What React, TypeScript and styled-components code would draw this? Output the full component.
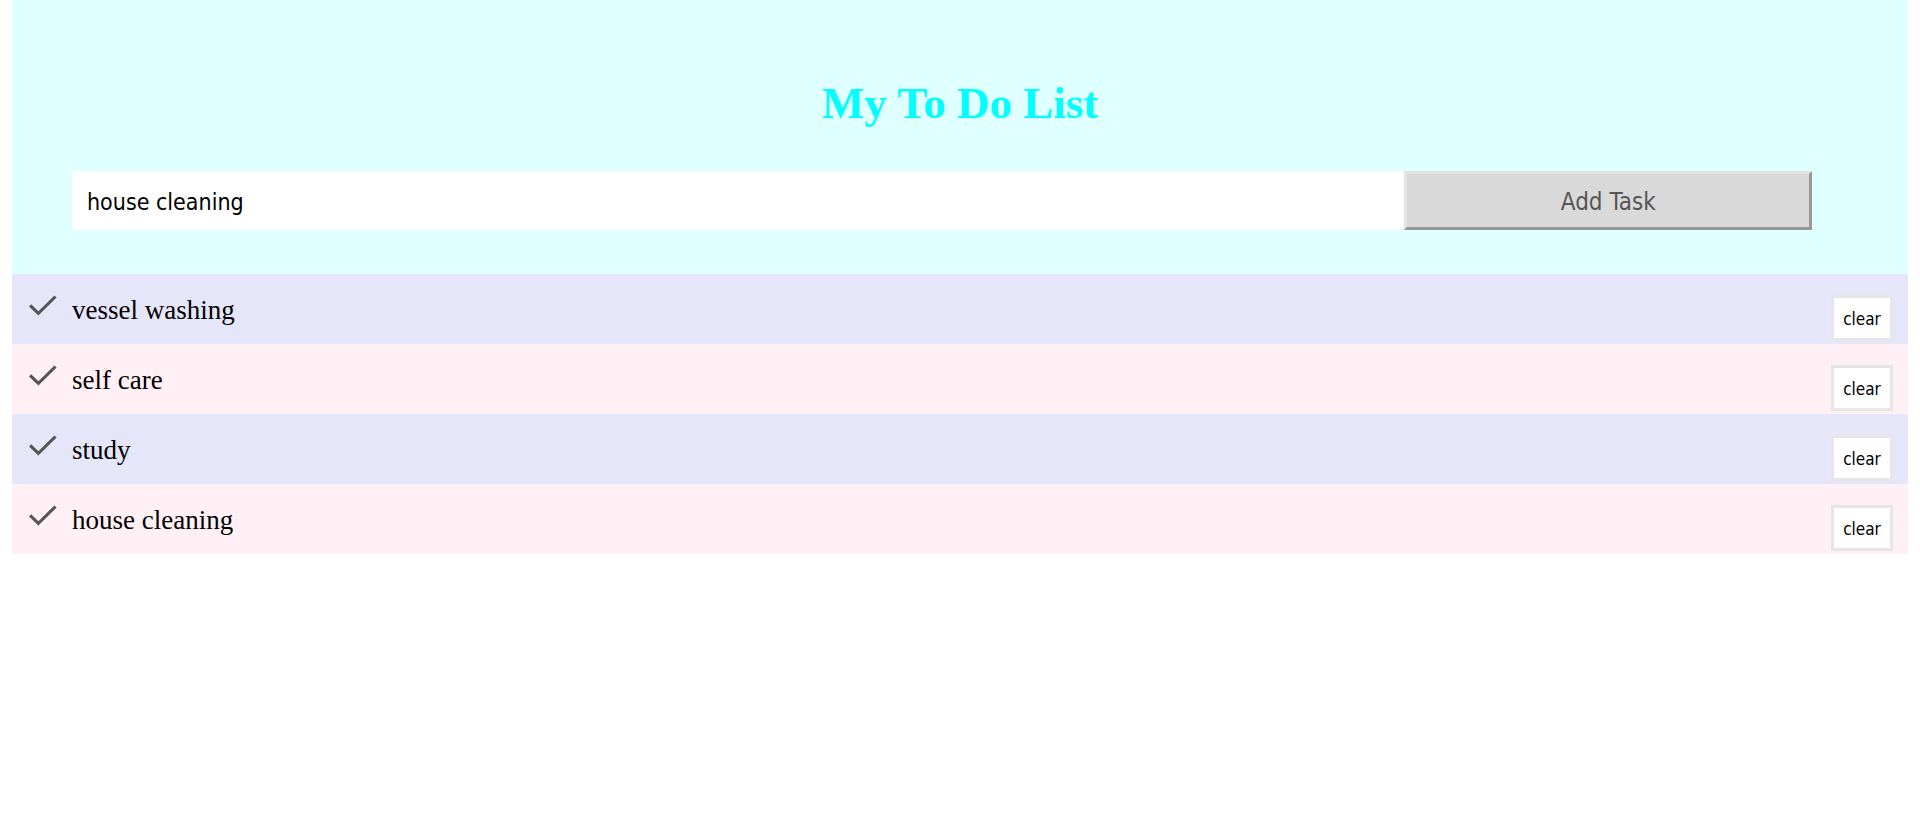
import { useState } from "react";
import type { FormEvent } from "react";
import styled, { createGlobalStyle } from "styled-components";

const sans = `"DejaVu Sans Condensed", Tahoma, sans-serif`;

const GlobalStyle = createGlobalStyle`
  *, *::before, *::after { box-sizing: border-box; }
  body {
    margin: 0 12px;
    background: #fff;
    color: #000;
    font-family: "Liberation Serif", "Times New Roman", serif;
  }
`;

const Header = styled.header`
  padding: 76px 60px 44px;
  background: #e0ffff;
`;

const Title = styled.h1`
  margin: 0 0 40px;
  color: #00ffff;
  font-size: 45px;
  line-height: 55px;
  text-align: center;
`;

const TaskForm = styled.form`
  display: flex;
  height: 59px;
`;

const TaskInput = styled.input`
  width: 75%;
  padding: 2px 15px 0;
  border: 0;
  border-radius: 0;
  outline: 0;
  background: #fff;
  color: #000;
  font: 23px ${sans};
`;

const AddButton = styled.button`
  width: 23%;
  padding: 2px 0 0;
  border: 3px solid;
  border-color: #e3e3e3 #979797 #979797 #e3e3e3;
  background: #d9d9d9;
  color: #555;
  font: 24px ${sans};
  cursor: pointer;
`;

const TaskList = styled.ul`
  margin: 0;
  padding: 0;
  list-style: none;
`;

const TaskItem = styled.li`
  display: flex;
  align-items: center;
  height: 70px;
  padding: 0 15px 0 12px;
  background: #fff0f5;

  &:nth-child(odd) {
    background: #e6e6fa;
  }
`;

const Check = styled.svg`
  flex: none;
  width: 36px;
  height: 36px;
  margin: 0 12px 8px 0;
  fill: #555;
`;

const TaskName = styled.span`
  flex: 1;
  padding-top: 2px;
  font-size: 27px;
  line-height: 32px;
`;

const ClearButton = styled.button`
  align-self: flex-end;
  width: 62px;
  height: 46px;
  margin-bottom: 3px;
  padding: 2px 0 0;
  border: 3px solid #e6e6e6;
  background: #fff;
  color: #000;
  font: 17px ${sans};
  cursor: pointer;
`;

export default function App() {
  const [draft, setDraft] = useState("house cleaning");
  const [tasks, setTasks] = useState(["vessel washing", "self care", "study", "house cleaning"]);

  const addTask = (event: FormEvent) => {
    event.preventDefault();
    if (draft.trim()) setTasks([...tasks, draft.trim()]);
  };

  return (
    <>
      <GlobalStyle />
      <main>
        <Header>
          <Title>My To Do List</Title>
          <TaskForm onSubmit={addTask}>
            <TaskInput
              type="text"
              aria-label="Task"
              value={draft}
              onChange={(event) => setDraft(event.target.value)}
            />
            <AddButton type="submit">Add Task</AddButton>
          </TaskForm>
        </Header>
        <TaskList>
          {tasks.map((task, index) => (
            <TaskItem key={index}>
              <Check viewBox="0 0 36 36" aria-hidden="true">
                <path d="M14.4 24.2 7.2 17.2 5 19.4 14.4 28.6 32.6 10.6 30.4 8.4z" />
              </Check>
              <TaskName>{task}</TaskName>
              <ClearButton
                type="button"
                onClick={() => setTasks(tasks.filter((_, i) => i !== index))}
              >
                clear
              </ClearButton>
            </TaskItem>
          ))}
        </TaskList>
      </main>
    </>
  );
}
